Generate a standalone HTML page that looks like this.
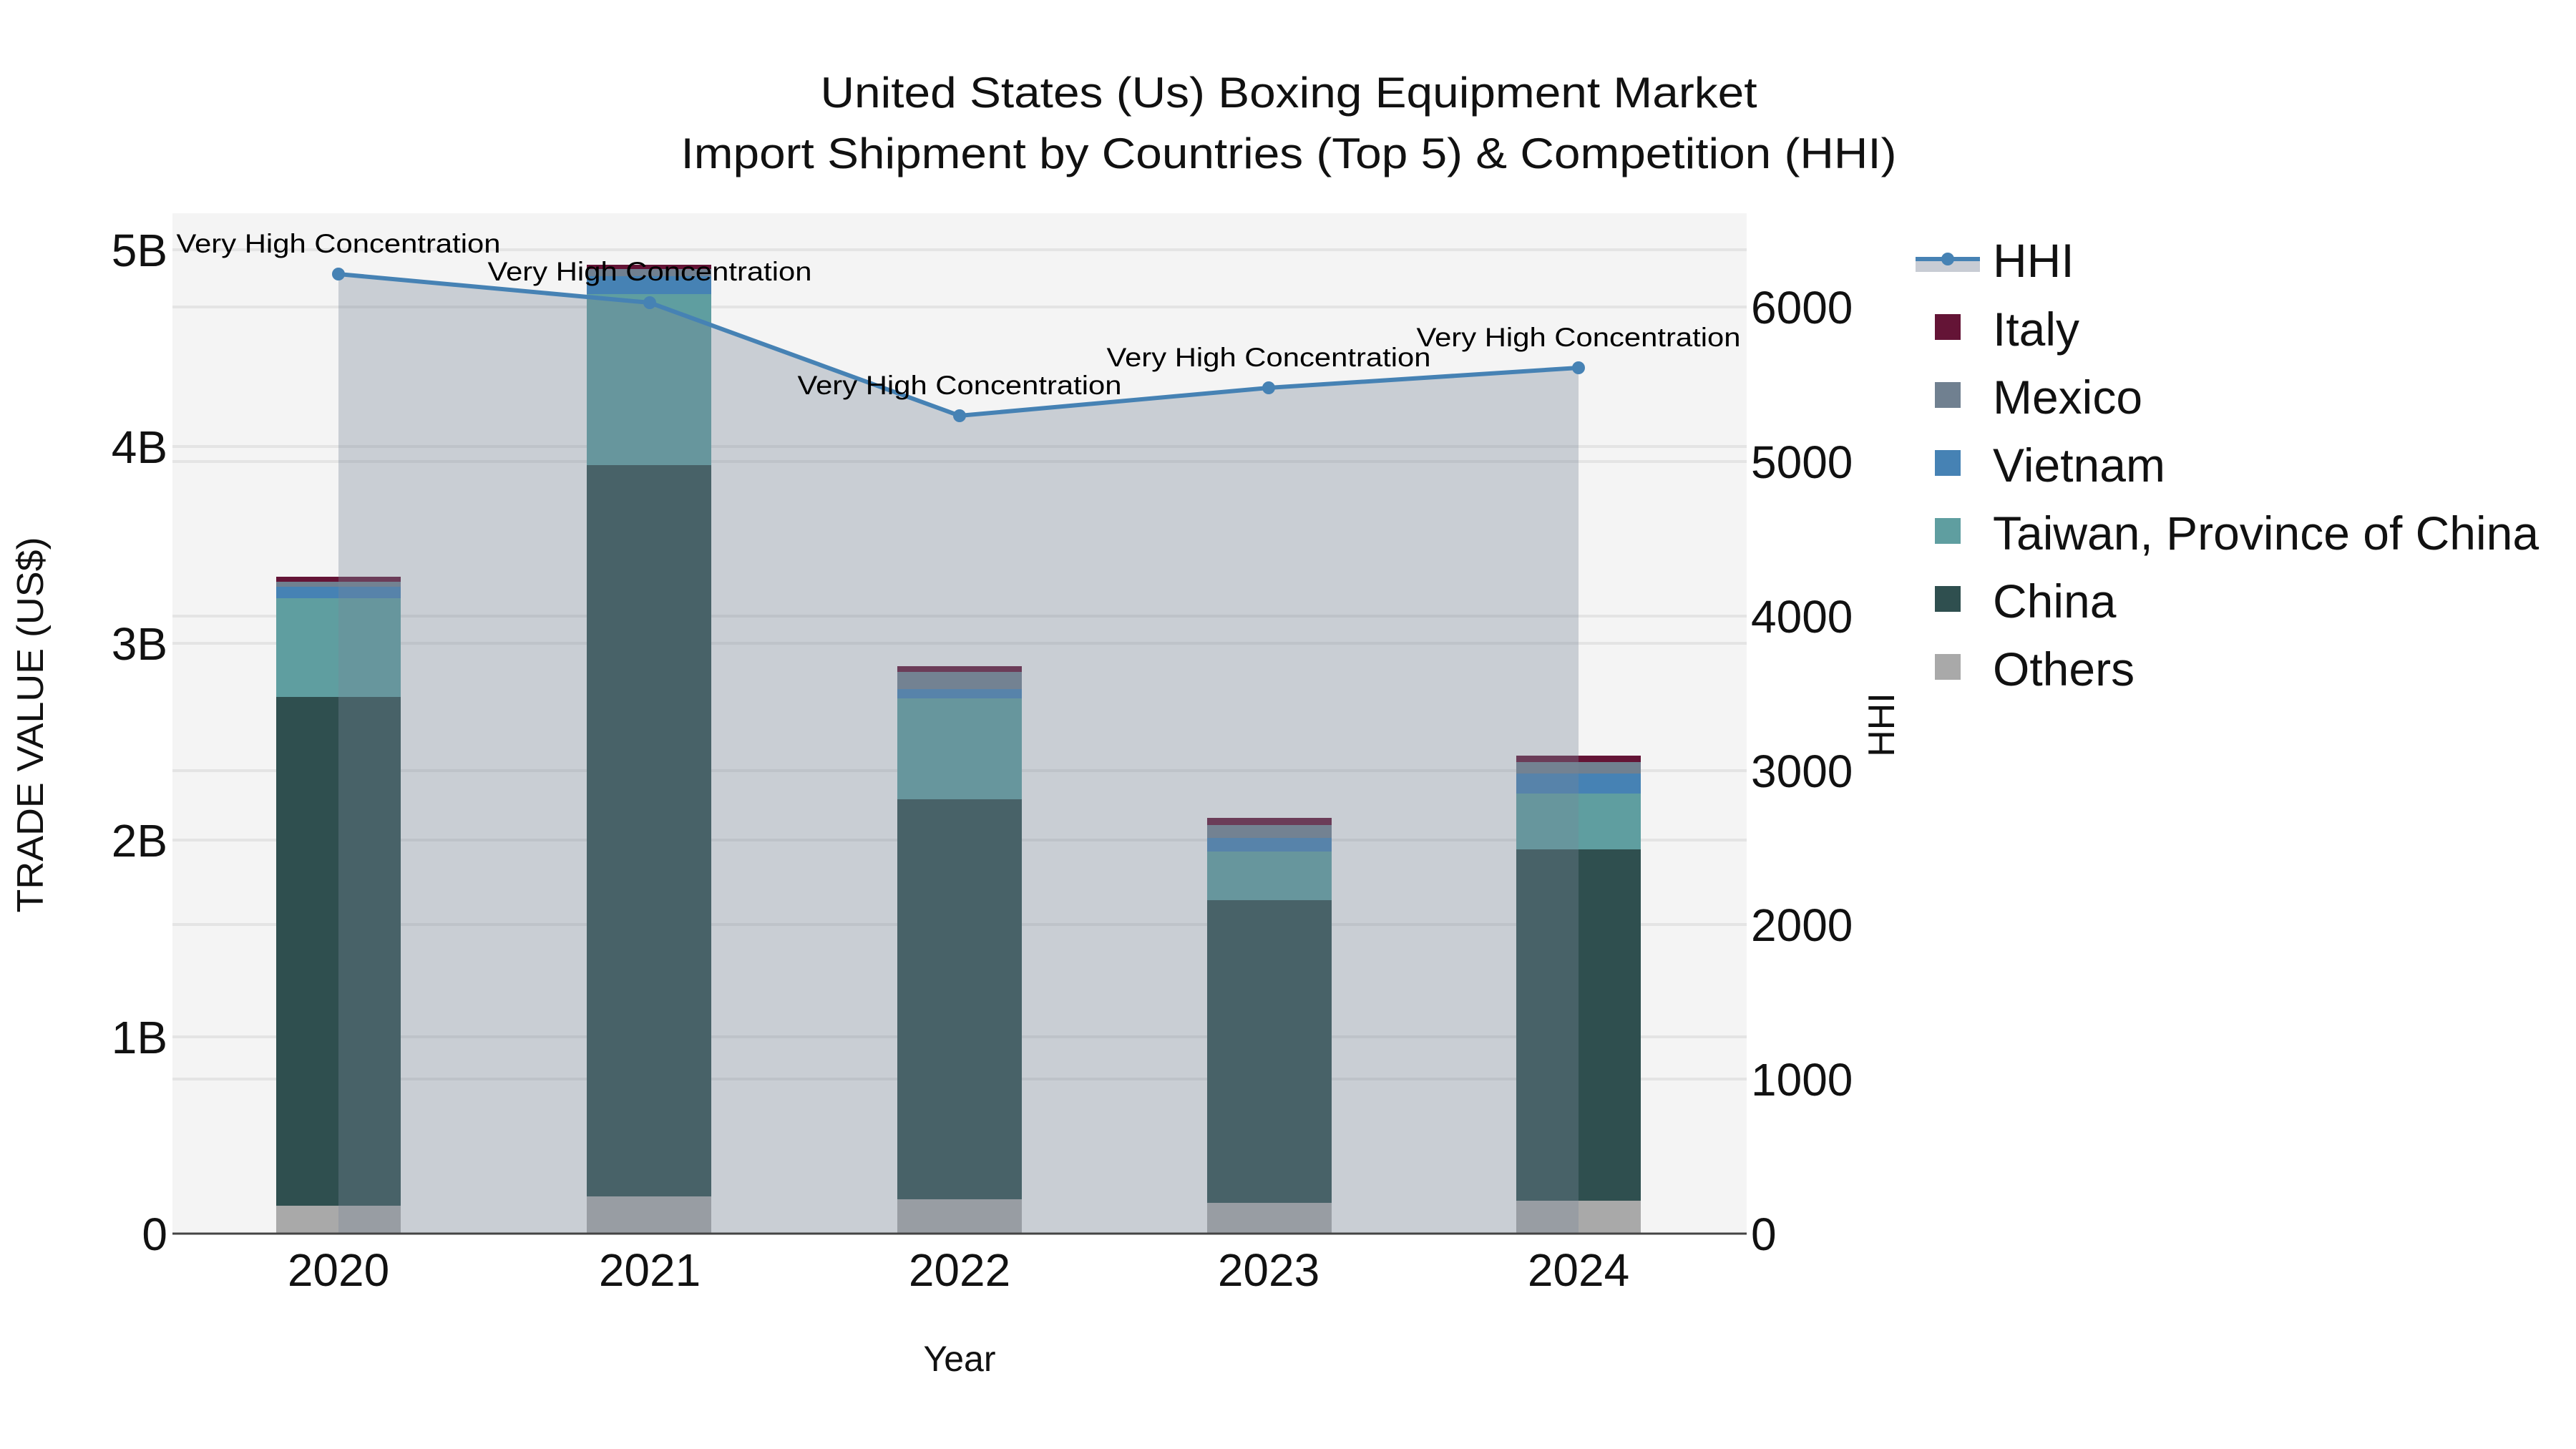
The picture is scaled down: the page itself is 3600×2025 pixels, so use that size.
<!DOCTYPE html>
<html><head><meta charset="utf-8"><style>html,body{margin:0;padding:0;background:#fff}svg{display:block}</style></head>
<body>
<svg width="3600" height="2025" viewBox="0 0 3600 2025" xmlns="http://www.w3.org/2000/svg" font-family="Liberation Sans, sans-serif">
<rect width="3600" height="2025" fill="#fff"/>
<rect x="241" y="298" width="2200" height="1426" fill="#f4f4f4"/>
<g stroke="#e4e4e4" stroke-width="4">
<line x1="241" x2="2441" y1="1449" y2="1449"/><line x1="241" x2="2441" y1="1174" y2="1174"/><line x1="241" x2="2441" y1="899" y2="899"/><line x1="241" x2="2441" y1="624" y2="624"/><line x1="241" x2="2441" y1="349" y2="349"/>
<line x1="241" x2="2441" y1="1508" y2="1508"/><line x1="241" x2="2441" y1="1292" y2="1292"/><line x1="241" x2="2441" y1="1077" y2="1077"/><line x1="241" x2="2441" y1="861" y2="861"/><line x1="241" x2="2441" y1="645" y2="645"/><line x1="241" x2="2441" y1="429" y2="429"/>
</g>
<!-- bars -->
<g>
<!-- 2020 -->
<rect x="386" y="1685" width="174" height="39" fill="#a9a9a9"/>
<rect x="386" y="974" width="174" height="711" fill="#2f4f4f"/>
<rect x="386" y="836" width="174" height="138" fill="#5f9ea0"/>
<rect x="386" y="820" width="174" height="16" fill="#4682b4"/>
<rect x="386" y="813" width="174" height="7" fill="#708090"/>
<rect x="386" y="806" width="174" height="7" fill="#641436"/>
<!-- 2021 -->
<rect x="820" y="1672" width="174" height="52" fill="#a9a9a9"/>
<rect x="820" y="650" width="174" height="1022" fill="#2f4f4f"/>
<rect x="820" y="411" width="174" height="239" fill="#5f9ea0"/>
<rect x="820" y="386" width="174" height="25" fill="#4682b4"/>
<rect x="820" y="376" width="174" height="10" fill="#708090"/>
<rect x="820" y="370" width="174" height="6" fill="#641436"/>
<!-- 2022 -->
<rect x="1254" y="1676" width="174" height="48" fill="#a9a9a9"/>
<rect x="1254" y="1117" width="174" height="559" fill="#2f4f4f"/>
<rect x="1254" y="976" width="174" height="141" fill="#5f9ea0"/>
<rect x="1254" y="963" width="174" height="13" fill="#4682b4"/>
<rect x="1254" y="939" width="174" height="24" fill="#708090"/>
<rect x="1254" y="931" width="174" height="8" fill="#641436"/>
<!-- 2023 -->
<rect x="1687" y="1681" width="174" height="43" fill="#a9a9a9"/>
<rect x="1687" y="1258" width="174" height="423" fill="#2f4f4f"/>
<rect x="1687" y="1190" width="174" height="68" fill="#5f9ea0"/>
<rect x="1687" y="1171" width="174" height="19" fill="#4682b4"/>
<rect x="1687" y="1153" width="174" height="18" fill="#708090"/>
<rect x="1687" y="1143" width="174" height="10" fill="#641436"/>
<!-- 2024 -->
<rect x="2119" y="1678" width="174" height="46" fill="#a9a9a9"/>
<rect x="2119" y="1187" width="174" height="491" fill="#2f4f4f"/>
<rect x="2119" y="1109" width="174" height="78" fill="#5f9ea0"/>
<rect x="2119" y="1081" width="174" height="28" fill="#4682b4"/>
<rect x="2119" y="1065" width="174" height="16" fill="#708090"/>
<rect x="2119" y="1056" width="174" height="9" fill="#641436"/>
</g>
<!-- HHI area -->
<polygon points="473,1724 473,383 908,423 1341,581 1773,542 2206,514 2206,1724" fill="rgba(119,136,153,0.35)"/>
<line x1="241" x2="2441" y1="1724" y2="1724" stroke="#444" stroke-width="3"/>
<polyline points="473,383 908,423 1341,581 1773,542 2206,514" fill="none" stroke="#4682b4" stroke-width="6"/>
<g fill="#4682b4"><circle cx="473" cy="383" r="9"/><circle cx="908" cy="423" r="9"/><circle cx="1341" cy="581" r="9"/><circle cx="1773" cy="542" r="9"/><circle cx="2206" cy="514" r="9"/></g>
<!-- annotations -->
<g font-size="37" text-anchor="middle" fill="#000">
<text x="473" y="353" textLength="453" lengthAdjust="spacingAndGlyphs">Very High Concentration</text>
<text x="908" y="392" textLength="453" lengthAdjust="spacingAndGlyphs">Very High Concentration</text>
<text x="1341" y="551" textLength="453" lengthAdjust="spacingAndGlyphs">Very High Concentration</text>
<text x="1773" y="512" textLength="453" lengthAdjust="spacingAndGlyphs">Very High Concentration</text>
<text x="2206" y="484" textLength="453" lengthAdjust="spacingAndGlyphs">Very High Concentration</text>
</g>
<!-- title -->
<g font-size="60" text-anchor="middle" fill="#111">
<text x="1801" y="150" textLength="1309" lengthAdjust="spacingAndGlyphs">United States (Us) Boxing Equipment Market</text>
<text x="1801" y="235" textLength="1699" lengthAdjust="spacingAndGlyphs">Import Shipment by Countries (Top 5) &amp; Competition (HHI)</text>
</g>
<!-- left ticks -->
<g font-size="64" text-anchor="end" fill="#111">
<text x="234" y="1747">0</text><text x="234" y="1472">1B</text><text x="234" y="1197">2B</text><text x="234" y="922">3B</text><text x="234" y="647">4B</text><text x="234" y="372">5B</text>
</g>
<!-- right ticks -->
<g font-size="64" text-anchor="start" fill="#111">
<text x="2447" y="1747">0</text><text x="2447" y="1531">1000</text><text x="2447" y="1315">2000</text><text x="2447" y="1100">3000</text><text x="2447" y="884">4000</text><text x="2447" y="668">5000</text><text x="2447" y="452">6000</text>
</g>
<!-- x ticks -->
<g font-size="64" text-anchor="middle" fill="#111">
<text x="473" y="1797">2020</text><text x="908" y="1797">2021</text><text x="1341" y="1797">2022</text><text x="1773" y="1797">2023</text><text x="2206" y="1797">2024</text>
</g>
<text x="1341" y="1916" font-size="50" text-anchor="middle" fill="#111">Year</text>
<text transform="translate(60,1013) rotate(-90)" font-size="52" text-anchor="middle" fill="#111" textLength="525" lengthAdjust="spacingAndGlyphs">TRADE VALUE (US$)</text>
<text transform="translate(2647,1013) rotate(-90)" font-size="52" text-anchor="middle" fill="#111">HHI</text>
<!-- legend -->
<rect x="2677" y="362" width="90" height="18" fill="#c8ccd4"/>
<line x1="2677" x2="2767" y1="362" y2="362" stroke="#4682b4" stroke-width="6"/>
<circle cx="2722" cy="362" r="9" fill="#4682b4"/>
<rect x="2704" y="439" width="36" height="36" fill="#641436"/>
<rect x="2704" y="534" width="36" height="36" fill="#708090"/>
<rect x="2704" y="629" width="36" height="36" fill="#4682b4"/>
<rect x="2704" y="724" width="36" height="36" fill="#5f9ea0"/>
<rect x="2704" y="819" width="36" height="36" fill="#2f4f4f"/>
<rect x="2704" y="914" width="36" height="36" fill="#a9a9a9"/>
<g font-size="66" fill="#111">
<text x="2785" y="387">HHI</text>
<text x="2785" y="483">Italy</text>
<text x="2785" y="578">Mexico</text>
<text x="2785" y="673">Vietnam</text>
<text x="2785" y="768">Taiwan, Province of China</text>
<text x="2785" y="863">China</text>
<text x="2785" y="958">Others</text>
</g>
</svg>
</body></html>
